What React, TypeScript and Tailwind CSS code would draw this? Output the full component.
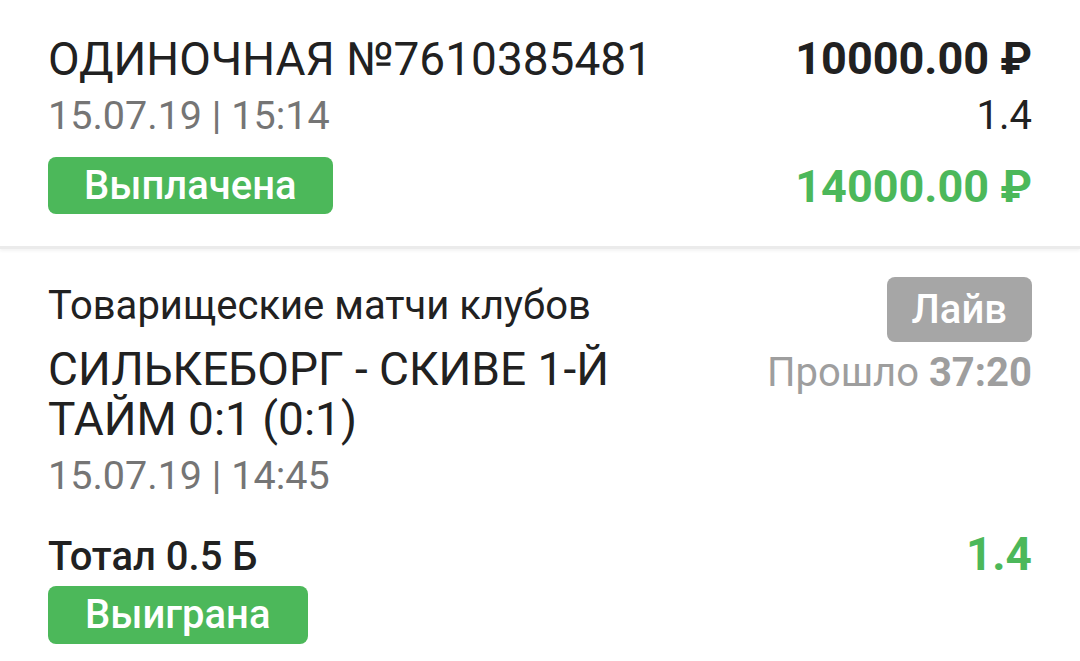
export default function App() {
  return (
    <div className="w-[1080px] h-[661px] overflow-hidden bg-white font-['Roboto','Liberation_Sans',sans-serif]">
      <section className="flex justify-between px-12 pt-8 pb-8 border-b-[3px] border-[#ebebeb] shadow-[0_2px_3px_rgba(0,0,0,0.05)]">
        <div className="flex flex-col items-start">
          <div className="text-[46px] leading-[54px] text-[#212121]">ОДИНОЧНАЯ №7610385481</div>
          <div className="mt-[6px] text-[39.5px] leading-[48px] text-[#757575]">15.07.19 | 15:14</div>
          <div className="mt-[17px] h-[57px] rounded-[8px] bg-[#4cb85a] px-[36px] text-[40px] font-medium leading-[57px] text-white">
            Выплачена
          </div>
        </div>
        <div className="flex flex-col items-end">
          <div className="text-[45px] font-bold leading-[54px] text-[#212121]">10000.00 ₽</div>
          <div className="mt-[6px] text-[40px] leading-[48px] text-[#212121]">1.4</div>
          <div className="mt-[19px] text-[45px] font-bold leading-[55px] text-[#4cb85a]">14000.00 ₽</div>
        </div>
      </section>
      <section className="px-12 pt-[28px]">
        <div className="flex justify-between items-start">
          <div className="w-[640px] flex flex-col">
            <div className="mt-[5px] text-[40px] leading-[48px] text-[#212121]">Товарищеские матчи клубов</div>
            <div className="mt-[14px] text-[46px] leading-[50px] text-[#212121]">СИЛЬКЕБОРГ - СКИВЕ 1-Й ТАЙМ 0:1 (0:1)</div>
            <div className="mt-[8px] text-[39.5px] leading-[48px] text-[#757575]">15.07.19 | 14:45</div>
          </div>
          <div className="flex flex-col items-end">
            <div className="h-[65px] rounded-[8px] bg-[#a6a6a6] px-[25px] text-[40px] font-medium leading-[65px] text-white">
              Лайв
            </div>
            <div className="mt-[7px] text-[40px] leading-[48px] text-[#9e9e9e]">
              Прошло <span className="font-bold">37:20</span>
            </div>
          </div>
        </div>
        <div className="mt-[30px] flex justify-between items-baseline">
          <div className="text-[40px] font-medium leading-[48px] text-[#212121]">Тотал 0.5 Б</div>
          <div className="text-[46px] font-bold leading-[48px] text-[#4cb85a]">1.4</div>
        </div>
        <div className="mt-[5px] inline-block h-[58px] rounded-[8px] bg-[#4cb85a] px-[37px] text-[40px] font-medium leading-[58px] text-white">
          Выиграна
        </div>
      </section>
    </div>
  );
}
